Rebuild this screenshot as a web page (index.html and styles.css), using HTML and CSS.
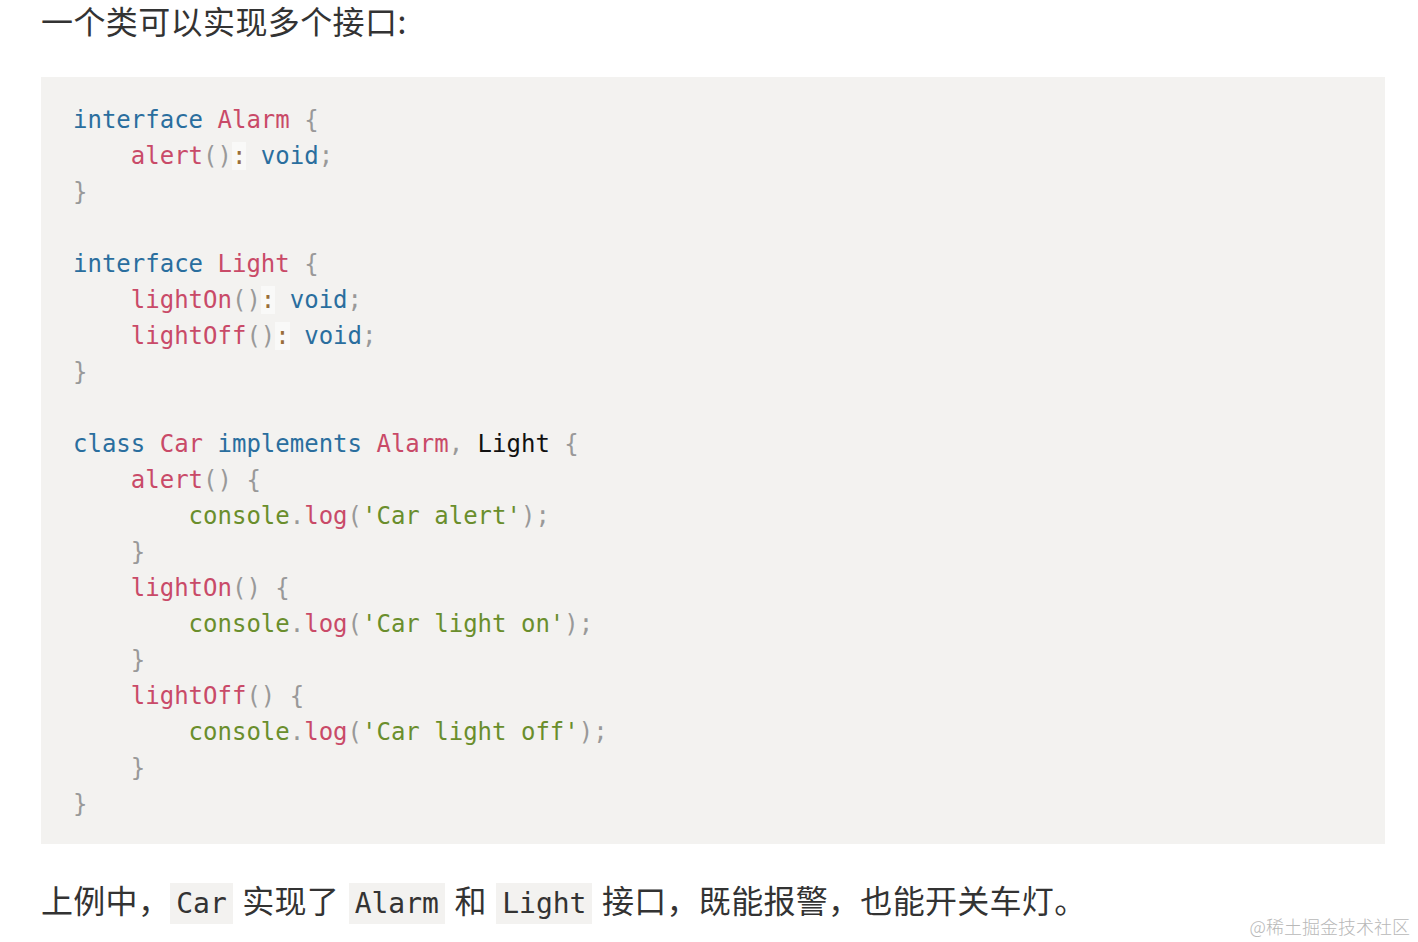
FILE: index.html
```html
<!DOCTYPE html>
<html lang="zh-CN">
<head>
<meta charset="utf-8">
<title>接口</title>
<link rel="stylesheet" href="styles.css">
</head>
<body>
<main class="article">
<p class="para para-first">一个类可以实现多个接口:</p>
<pre class="code"><span class="k">interface</span> <span class="c">Alarm</span> <span class="p">{</span>
    <span class="f">alert</span><span class="p">()</span><span class="o">:</span> <span class="k">void</span><span class="p">;</span>
<span class="p">}</span>

<span class="k">interface</span> <span class="c">Light</span> <span class="p">{</span>
    <span class="f">lightOn</span><span class="p">()</span><span class="o">:</span> <span class="k">void</span><span class="p">;</span>
    <span class="f">lightOff</span><span class="p">()</span><span class="o">:</span> <span class="k">void</span><span class="p">;</span>
<span class="p">}</span>

<span class="k">class</span> <span class="c">Car</span> <span class="k">implements</span> <span class="c">Alarm</span><span class="p">,</span> Light <span class="p">{</span>
    <span class="f">alert</span><span class="p">()</span> <span class="p">{</span>
        <span class="s">console</span><span class="p">.</span><span class="f">log</span><span class="p">(</span><span class="s">'Car alert'</span><span class="p">);</span>
    <span class="p">}</span>
    <span class="f">lightOn</span><span class="p">()</span> <span class="p">{</span>
        <span class="s">console</span><span class="p">.</span><span class="f">log</span><span class="p">(</span><span class="s">'Car light on'</span><span class="p">);</span>
    <span class="p">}</span>
    <span class="f">lightOff</span><span class="p">()</span> <span class="p">{</span>
        <span class="s">console</span><span class="p">.</span><span class="f">log</span><span class="p">(</span><span class="s">'Car light off'</span><span class="p">);</span>
    <span class="p">}</span>
<span class="p">}</span></pre>
<p class="para para-after">上例中，<code class="inline inline-first">Car</code> 实现了 <code class="inline">Alarm</code> 和 <code class="inline">Light</code> 接口，既能报警，也能开关车灯。</p>
</main>
<div class="watermark">@稀土掘金技术社区</div>
</body>
</html>
```
FILE: styles.css
```css
html, body {
  margin: 0;
  padding: 0;
  background: #ffffff;
}

body {
  width: 1418px;
  height: 942px;
  overflow: hidden;
  position: relative;
  font-family: "Noto Sans CJK SC", "Noto Sans", sans-serif;
  color: #333333;
}

.article {
  padding: 0 33px 0 41px;
}

.para {
  margin: 0;
  font-size: 32px;
  line-height: 40px;
  color: #333333;
}

.para-first {
  letter-spacing: 0.4px;
  line-height: 38px;
  padding-top: 1px;
}

.para-after {
  margin-top: 35px;
  letter-spacing: 0.3px;
}

.code {
  margin: 38px 0 0 0;
  padding: 25px 32px 22px 32px;
  background: #f3f2f0;
  font-family: "DejaVu Sans Mono", "Liberation Mono", monospace;
  font-size: 24px;
  line-height: 36px;
  color: #111111;
  white-space: pre;
  overflow: hidden;
}

.k { color: #2a6e9e; }
.c { color: #c94a68; }
.f { color: #c94a68; }
.s { color: #6a8e2c; }
.p { color: #999999; }
.o {
  color: #9a6e3a;
  background: rgba(255, 255, 255, 0.5);
}

.inline {
  font-family: "DejaVu Sans Mono", "Liberation Mono", monospace;
  font-size: 28px;
  letter-spacing: 0;
  background: #f3f2f0;
  color: #333333;
  padding: 4px 6px;
  margin: 0 2px;
}

.inline-first {
  margin-left: 0;
}

.watermark {
  position: absolute;
  right: 8px;
  bottom: 4px;
  font-family: "Noto Sans CJK SC", sans-serif;
  font-weight: 300;
  font-size: 18px;
  line-height: 24px;
  color: #b8b8b8;
}
```
